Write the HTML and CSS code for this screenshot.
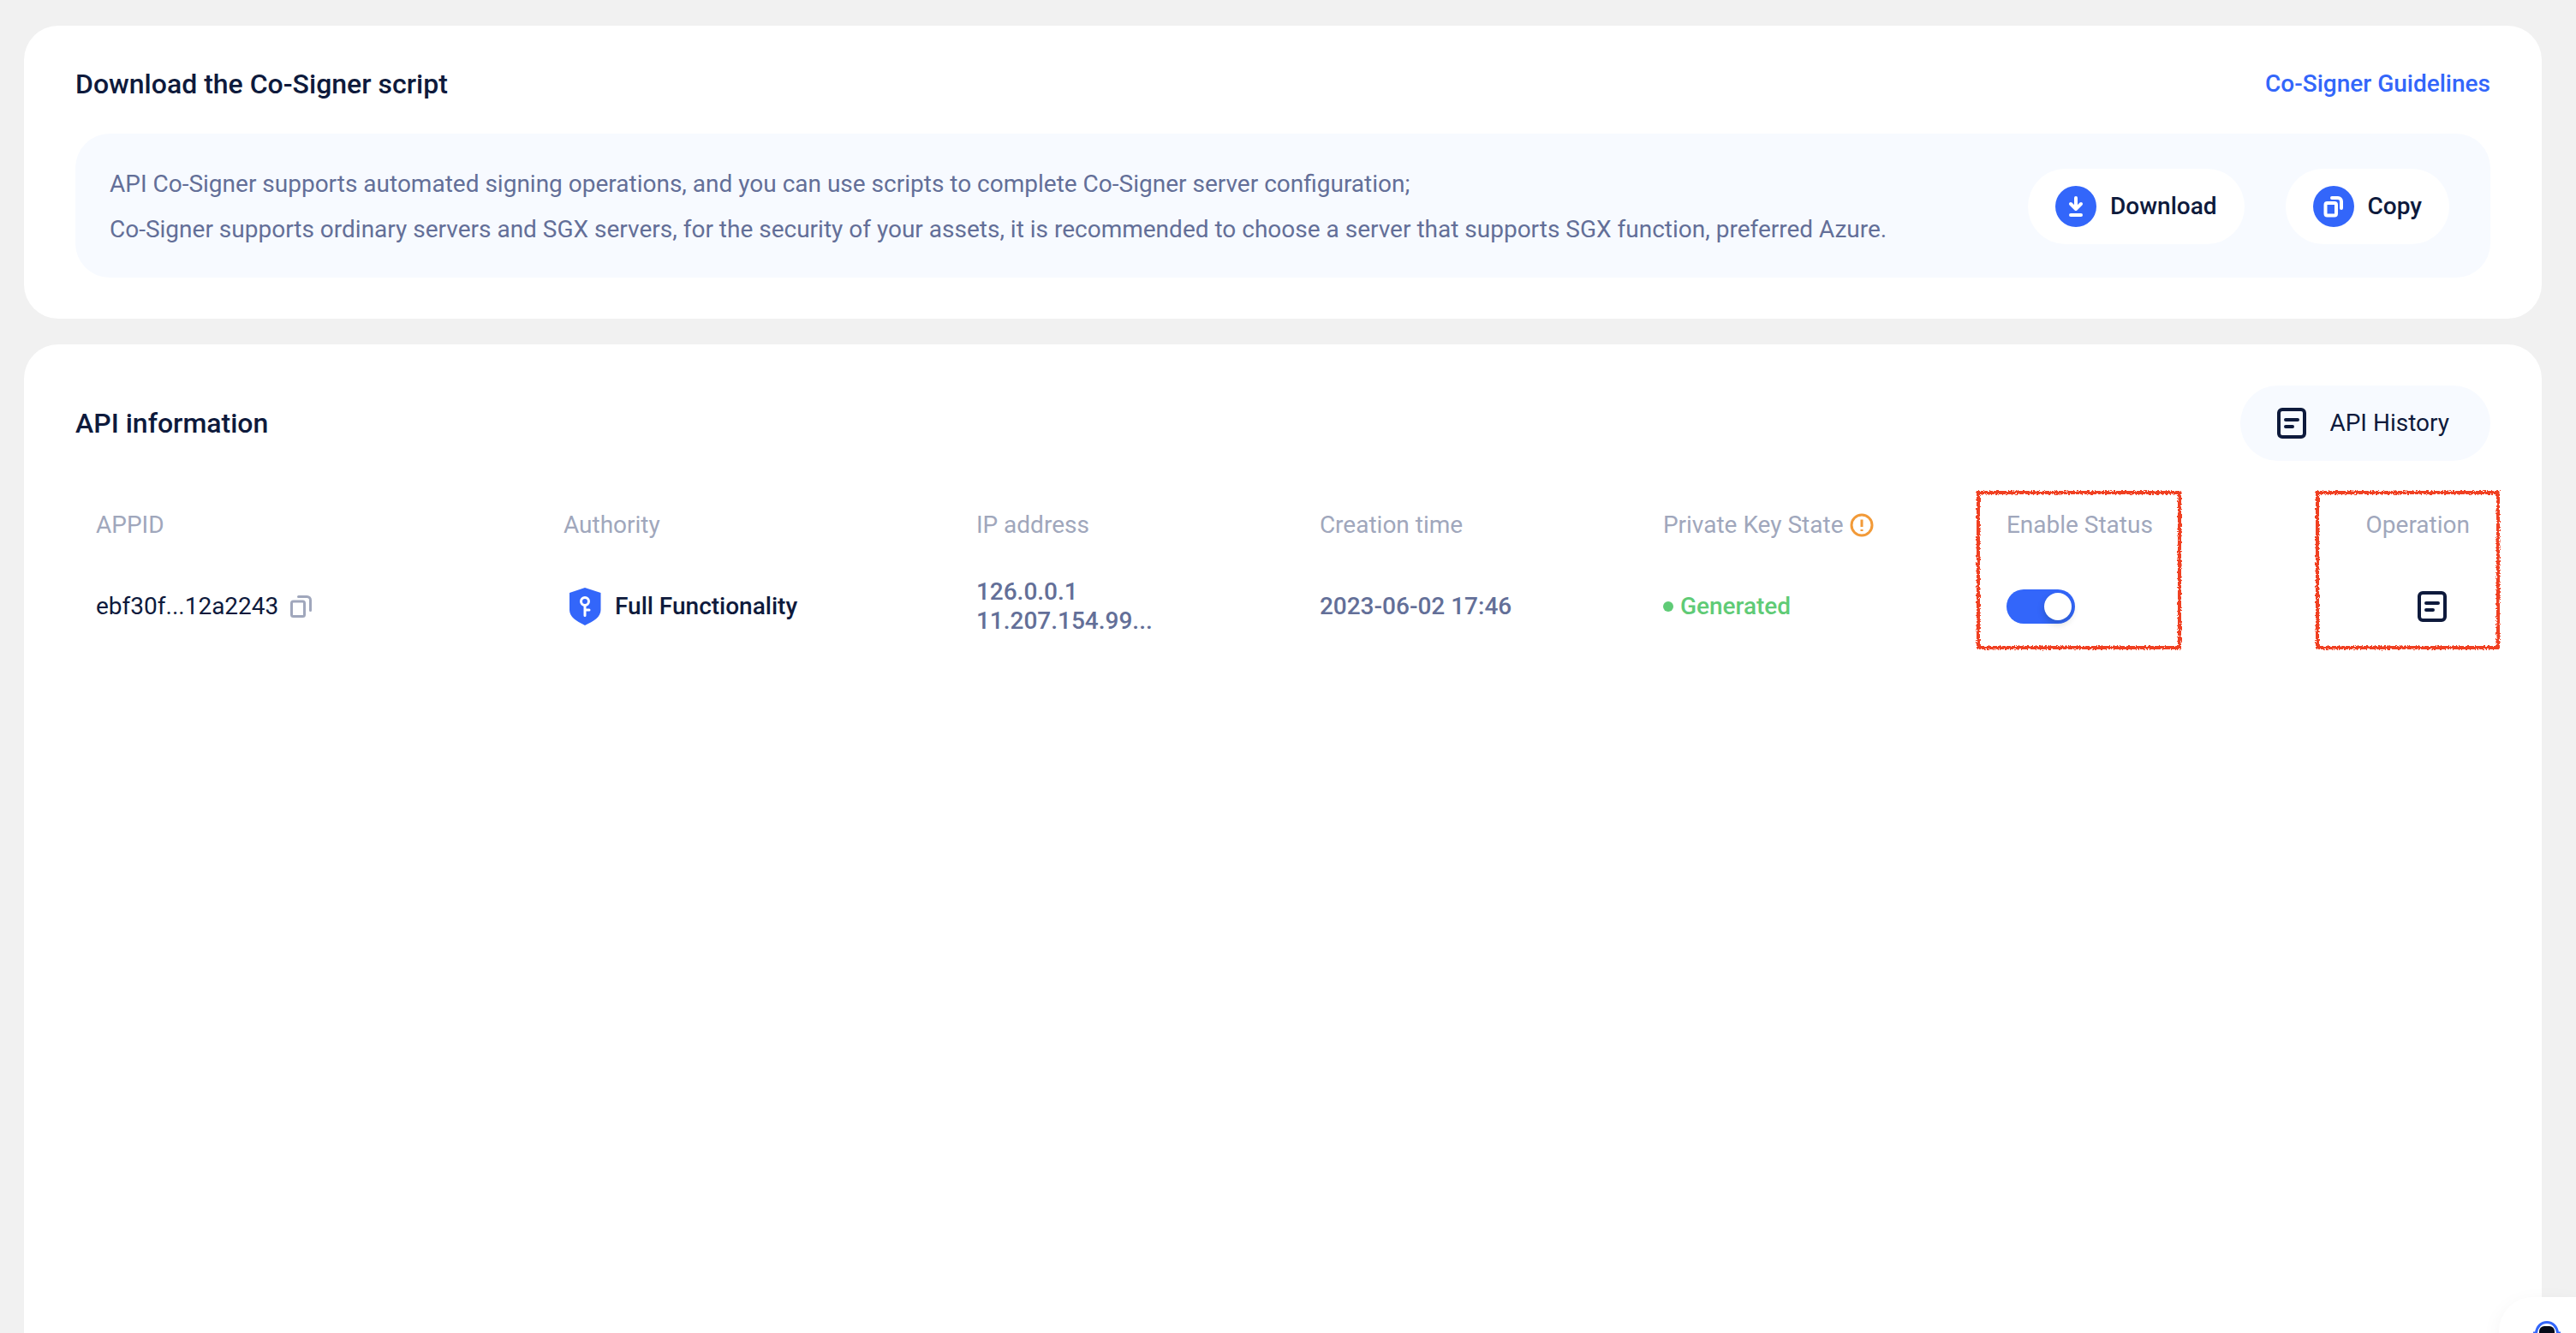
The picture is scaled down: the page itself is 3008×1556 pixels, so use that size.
FILE: index.html
```html
<!DOCTYPE html>
<html lang="en">
<head>
<meta charset="utf-8">
<title>API Co-Signer</title>
<meta name="viewport" content="width=device-width, initial-scale=1">
<link rel="stylesheet" href="styles.css">
</head>
<body>
<svg class="defs" aria-hidden="true">
  <defs>
    <symbol id="icon-copy" viewBox="0 0 28 28">
      <rect x="3.5" y="8" width="15" height="17.500" rx="2"/>
      <path d="M11.500 2.500h10a4 4 0 0 1 4 4v12"/>
    </symbol>
    <symbol id="icon-record" viewBox="0 0 48 48">
      <rect x="9" y="8" width="30" height="32" rx="4"/>
      <path d="M17 20h14M17 28h8"/>
    </symbol>
    <filter id="crayon" x="-5%" y="-5%" width="110%" height="110%">
      <feTurbulence type="fractalNoise" baseFrequency="0.6" numOctaves="2" seed="4" result="noise"/>
      <feDisplacementMap in="SourceGraphic" in2="noise" scale="5" xChannelSelector="R" yChannelSelector="G"/>
    </filter>
  </defs>
</svg>
<main class="page">
  <section class="card">
    <header class="card-head">
      <h2 class="title">Download the Co-Signer script</h2>
      <a class="guide-link" href="#guidelines">Co-Signer Guidelines</a>
    </header>
    <div class="script-box">
      <div class="script-text">
        <p>API Co-Signer supports automated signing operations, and you can use scripts to complete Co-Signer server configuration;</p>
        <p>Co-Signer supports ordinary servers and SGX servers, for the security of your assets, it is recommended to choose a server that supports SGX function, preferred Azure.</p>
      </div>
      <div class="actions">
        <button class="pill" type="button">
          <svg class="pill-icon" viewBox="0 0 48 48" aria-hidden="true">
            <circle class="disc" cx="24" cy="24" r="24"/>
            <path d="M24 14v13M18 21l6 6 6-6M18 34h12"/>
          </svg>
          Download
        </button>
        <button class="pill" type="button">
          <svg class="pill-icon" viewBox="0 0 48 48" aria-hidden="true">
            <circle class="disc" cx="24" cy="24" r="24"/>
            <rect x="14.500" y="20" width="12.500" height="14.500" rx="2"/>
            <path d="M22 14h7a4 4 0 0 1 4 4v8"/>
          </svg>
          Copy
        </button>
      </div>
    </div>
  </section>

  <section class="card card-main">
    <header class="card-head card-head-main">
      <h2 class="title">API information</h2>
      <button class="pill history" type="button">
        <svg class="record-icon" aria-hidden="true"><use href="#icon-record"/></svg>
        API History
      </button>
    </header>
    <table class="api-table">
      <colgroup>
        <col class="col-id"><col class="col-auth"><col class="col-mid"><col class="col-mid"><col class="col-mid"><col>
      </colgroup>
      <thead>
        <tr>
          <th scope="col">APPID</th>
          <th scope="col">Authority</th>
          <th scope="col">IP address</th>
          <th scope="col">Creation time</th>
          <th scope="col">
            <span class="cell">Private Key State
              <svg class="warn-icon" viewBox="0 0 28 28" aria-hidden="true">
                <circle cx="14" cy="14" r="12"/><path d="M14 7.500v8.500M14 19v2"/>
              </svg>
            </span>
          </th>
          <th scope="col">
            <div class="split"><span class="marked">Enable Status
              <svg class="mark mark-status" aria-hidden="true"><rect x="3" y="3" width="235" height="181"/></svg></span>
            <span class="marked">Operation
              <svg class="mark mark-operation" aria-hidden="true"><rect x="3" y="3" width="211" height="181"/></svg></span></div>
          </th>
        </tr>
      </thead>
      <tbody>
        <tr>
          <td><span class="cell cell-id">ebf30f...12a2243
            <button class="icon-button" type="button" aria-label="Copy APPID"><svg class="copy-icon" aria-hidden="true"><use href="#icon-copy"/></svg></button></span></td>
          <td><span class="cell cell-auth">
            <svg class="shield-icon" viewBox="0 0 48 48" aria-hidden="true">
              <path class="shield" d="M25 2l18.500 6v20c0 8-8 13-18.500 18C15 41 7 36 7 28V8z"/>
              <circle cx="25" cy="18" r="4.500"/><path d="M25 23v11.500M25 28h5"/>
            </svg>Full Functionality</span></td>
          <td class="muted">126.0.0.1<br>11.207.154.99...</td>
          <td class="muted">2023-06-02 17:46</td>
          <td><span class="cell state"><i class="dot"></i>Generated</span></td>
          <td>
            <div class="split">
              <input class="switch" type="checkbox" role="switch" aria-label="Enable Status" checked>
              <button class="icon-button record-button" type="button" aria-label="Operation record"><svg class="record-icon" aria-hidden="true"><use href="#icon-record"/></svg></button>
            </div>
          </td>
        </tr>
      </tbody>
    </table>
  </section>
</main>
<aside class="helper" aria-label="Assistant">
  <svg class="helper-icon" viewBox="0 0 60 42" aria-hidden="true">
    <path class="helper-ring" d="M14 42h3.500c.5-7 5.500-12.500 12.500-12.500S42 35 42.500 42H46"/>
    <rect x="21" y="34" width="18" height="14" rx="6"/>
  </svg>
</aside>
</body>
</html>
```

FILE: styles.css
```css
* { box-sizing: border-box; }

body {
  margin: 0;
  background: #f1f1f1;
  color: #0e1a3c;
  font: 400 28px/34px Roboto, "Liberation Sans", sans-serif;
}

.defs { position: absolute; width: 0; height: 0; }

.page {
  display: flex;
  flex-direction: column;
  gap: 30px;
  height: 100vh;
  padding: 30px 40px 0 28px;
  overflow: hidden;
}

.card { padding: 48px 60px; background: #fff; border-radius: 40px; }
.card-main { flex: 1; border-radius: 40px 40px 0 0; }

.card-head { display: flex; justify-content: space-between; align-items: center; height: 40px; margin-bottom: 38px; }
.card-head-main { height: 88px; margin-bottom: 30px; }

.title { margin: 0; font-size: 32px; font-weight: 500; line-height: 40px; }
.guide-link { color: #3366fa; font-weight: 500; text-decoration: none; }

.script-box {
  display: flex;
  justify-content: space-between;
  align-items: center;
  gap: 48px;
  min-height: 168px;
  padding: 32px 48px 30px 40px;
  background: #f7faff;
  border-radius: 40px;
}
.script-text p { margin: 0; color: #636f98; line-height: 53px; }

.actions { display: flex; gap: 48px; }

button { border: 0; background: none; color: inherit; font: inherit; cursor: pointer; }
.pill {
  display: flex;
  align-items: center;
  gap: 16px;
  height: 88px;
  padding: 0 32px;
  background: #fff;
  border-radius: 44px;
  font-weight: 500;
  white-space: nowrap;
}
.pill-icon { width: 48px; height: 48px; fill: none; stroke: #fff; stroke-width: 4; stroke-linecap: round; stroke-linejoin: round; }
.pill-icon .disc { fill: #3366fa; stroke: none; }

.history { gap: 20px; padding: 0 48px 0 36px; background: #f7faff; font-weight: 400; }
.record-icon { display: block; width: 48px; height: 48px; fill: none; stroke: #0e1a3c; stroke-width: 4; stroke-linecap: round; }

.api-table { width: 100%; table-layout: fixed; border-collapse: collapse; text-align: left; }
.col-id { width: 19.36%; }
.col-auth { width: 17.09%; }
.col-mid { width: 14.22%; }

th { height: 90px; padding: 0 24px; color: #a0a7bc; font-weight: 400; }
td { height: 100px; padding: 0 24px; }
.muted { color: #636f98; font-weight: 500; }

.cell { display: flex; align-items: center; gap: 8px; white-space: nowrap; }
.cell-id { gap: 12px; }
.cell-auth { gap: 12px; font-weight: 500; }
.split { display: flex; justify-content: space-between; align-items: center; }

.icon-button { padding: 0; }
.record-button { padding: 0 20px; }
.copy-icon { display: block; width: 28px; height: 28px; fill: none; stroke: #a0a7bc; stroke-width: 3; stroke-linecap: round; }
.warn-icon { width: 28px; height: 28px; fill: none; stroke: #f29a38; stroke-width: 3; }
.shield-icon { width: 48px; height: 48px; fill: none; stroke: #fff; stroke-width: 3; stroke-linecap: round; }
.shield { fill: #3366fa; stroke: none; }

.state { color: #5fcb76; font-weight: 500; }
.dot { width: 12px; height: 12px; background: currentColor; border-radius: 50%; }

.switch {
  appearance: none;
  width: 80px;
  height: 40px;
  margin: 0;
  padding: 4px;
  background: #a0a7bc;
  border-radius: 20px;
  cursor: pointer;
}
.switch::before {
  content: "";
  display: block;
  width: 32px;
  height: 32px;
  background: #fff;
  border-radius: 50%;
  box-shadow: 0 4px 8px rgba(0, 35, 11, 0.2);
}
.switch:checked { background: #3366fa; }
.switch:checked::before { margin-left: auto; }

/* hand-drawn markers around the two highlighted columns */
.marked { position: relative; }
.mark { position: absolute; top: -24px; height: 187px; fill: none; stroke: #f04124; stroke-width: 4; pointer-events: none; overflow: visible; }
.mark rect { filter: url(#crayon); }
.mark-status { left: -36px; width: 241px; }
.mark-operation { right: -36px; width: 217px; }

.helper {
  position: fixed;
  right: 0;
  bottom: 0;
  width: 90px;
  height: 42px;
  background: #fff;
  border-radius: 40px 0 0 0;
  box-shadow: 0 8px 24px rgba(0, 0, 0, 0.06);
}
.helper-icon { position: absolute; right: 4px; bottom: 0; width: 60px; height: 42px; overflow: hidden; fill: #050a18; }
.helper-ring { fill: #fff; stroke: #3366fa; stroke-width: 3; }
```
